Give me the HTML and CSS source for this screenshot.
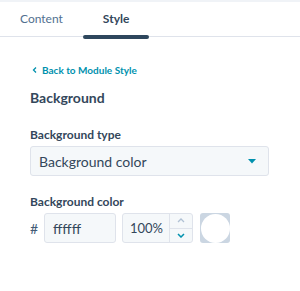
FILE: index.html
```html
<!DOCTYPE html>
<html>
<head>
    <title>Module Style</title>
    <link rel="stylesheet" href="styles.css">
</head>
<body>
    <div class="tabs">
        <div class="tab">Content</div>
        <div class="tab active">Style</div>
    </div>

    <div class="panel">
        <a class="back" href="#">
            <svg width="5" height="8" viewBox="0 0 5 8"><path d="M4 1.5L1.5 4 4 6.5" fill="none" stroke="#0091ae" stroke-width="1.3"/></svg>
            Back to Module Style
        </a>

        <h2>Background</h2>

        <div class="field first">
            <label>Background type</label>
            <div class="select">
                <span>Background color</span>
                <svg width="8" height="5" viewBox="0 0 8 5"><path d="M0 0h8L4 4.5z" fill="#0091ae"/></svg>
            </div>
        </div>

        <div class="field">
            <label>Background color</label>
            <div class="color-row">
                <span class="hash">#</span>
                <div class="input hex">ffffff</div>
                <div class="input alpha">
                    <span class="value">100%</span>
                    <div class="stepper">
                        <div class="step">
                            <svg width="8" height="5" viewBox="0 0 8 5"><path d="M1 4l3-3 3 3" fill="none" stroke="#b0c1d4" stroke-width="1.3"/></svg>
                        </div>
                        <div class="step">
                            <svg width="8" height="5" viewBox="0 0 8 5"><path d="M1 1l3 3 3-3" fill="none" stroke="#0091ae" stroke-width="1.5"/></svg>
                        </div>
                    </div>
                </div>
                <div class="swatch"><div class="circle"></div></div>
            </div>
        </div>
    </div>
</body>
</html>
```

FILE: styles.css
```css
body {
    margin: 0;
    background: #fff;
    font-family: Lato, "Open Sans", Arial, sans-serif;
    color: #33475b;
}
.tabs {
    display: flex;
    height: 34px;
    border-top: 2px solid #f0f3f7;
    border-bottom: 1px solid #dfe3eb;
}
.tab {
    position: relative;
    padding: 0 20px;
    font-size: 12px;
    line-height: 34px;
    color: #516f90;
}
.tab.active {
    font-weight: 700;
    color: #33475b;
}
.tab.active::after {
    content: "";
    position: absolute;
    left: 0;
    right: 0;
    bottom: -3px;
    height: 4px;
    border-radius: 2px;
    background: #2e475d;
}
.panel {
    padding: 26px 30px 0 30px;
}
.back {
    display: flex;
    align-items: center;
    gap: 5px;
    margin-left: 2px;
    font-size: 10px;
    line-height: 14px;
    font-weight: 700;
    color: #0091ae;
    text-decoration: none;
}
h2 {
    margin: 12px 0 0 0;
    font-size: 14px;
    line-height: 18px;
    font-weight: 700;
}
.field {
    margin-top: 18px;
}
.field.first {
    margin-top: 20px;
}
label {
    display: block;
    font-size: 12px;
    line-height: 16px;
    font-weight: 700;
    margin-bottom: 3px;
}
.select {
    display: flex;
    align-items: center;
    justify-content: space-between;
    width: 239px;
    height: 30px;
    box-sizing: border-box;
    padding: 0 12px 0 8px;
    background: #f5f8fa;
    border: 1px solid #dfe3eb;
    border-radius: 3px;
    font-size: 14px;
}
.color-row {
    display: flex;
    align-items: center;
}
.hash {
    width: 14px;
    font-size: 14px;
    color: #425b76;
}
.input {
    display: flex;
    align-items: center;
    height: 30px;
    box-sizing: border-box;
    background: #f5f8fa;
    border: 1px solid #dfe3eb;
    border-radius: 3px;
    font-size: 14px;
}
.hex {
    width: 72px;
    padding-left: 8px;
}
.alpha {
    width: 71px;
    margin-left: 6px;
    padding-left: 7px;
    justify-content: space-between;
}
.alpha .value {
    font-size: 13px;
}
.stepper {
    display: flex;
    flex-direction: column;
    width: 22px;
    height: 100%;
    border-left: 1px solid #dfe3eb;
}
.step {
    flex: 1;
    display: flex;
    align-items: center;
    justify-content: center;
}
.step + .step {
    border-top: 1px solid #dfe3eb;
}
.swatch {
    width: 30px;
    height: 30px;
    margin-left: 7px;
    background: #cbd6e2;
    border-radius: 3px;
    display: flex;
    align-items: center;
    justify-content: center;
}
.circle {
    width: 29px;
    height: 29px;
    border-radius: 50%;
    background: #fff;
}
```
